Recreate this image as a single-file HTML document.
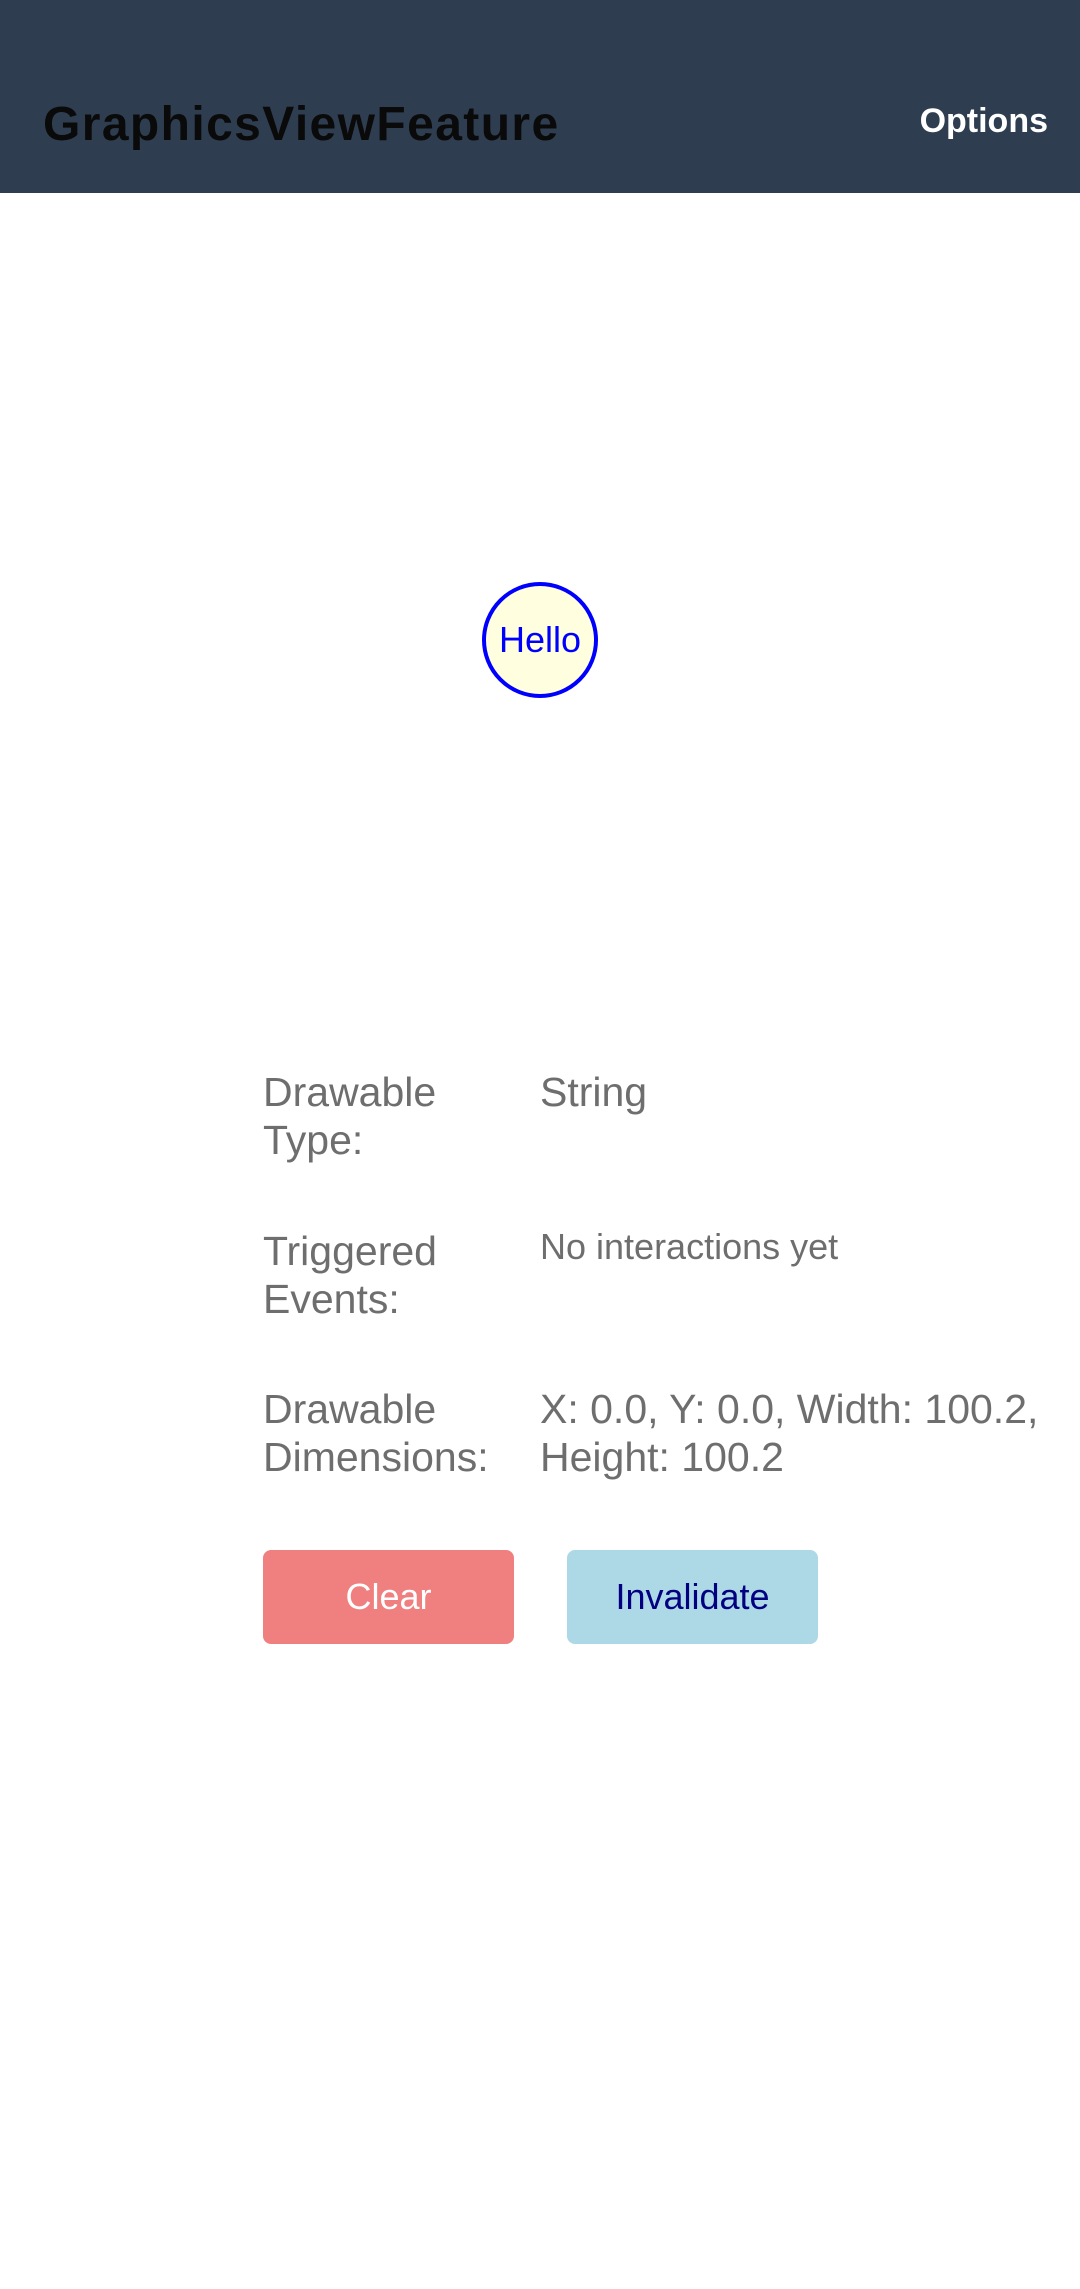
<!DOCTYPE html>
<html><head><meta charset="utf-8">
<style>
*{margin:0;padding:0;box-sizing:border-box}
body{width:1080px;height:2289px;background:#fff;font-family:"Liberation Sans",sans-serif;position:relative;overflow:hidden}
.hdr{position:absolute;left:0;top:0;width:1080px;height:193px;background:#2e3e50}
.title{position:absolute;left:43px;top:95px;font-size:48px;line-height:60px;color:#0a0a0a;font-weight:bold;letter-spacing:1.4px}
.opt{position:absolute;right:32px;top:99px;font-size:34px;line-height:44px;color:#fff;font-weight:bold}
.circle{position:absolute;left:482px;top:582px;width:116px;height:116px;border-radius:50%;border:4px solid #0000ff;background:#ffffe0;color:#0000ff;font-size:36px;display:flex;align-items:center;justify-content:center}
.t{position:absolute;color:#6e6e6e;font-size:41px;line-height:48px}
.btn{position:absolute;top:1550px;height:94px;width:251px;border-radius:8px;display:flex;align-items:center;justify-content:center;font-size:36px}
</style></head><body>
<div class="hdr"><div class="title">GraphicsViewFeature</div><div class="opt">Options</div></div>
<div class="circle">Hello</div>
<div class="t" style="left:263px;top:1068px">Drawable<br>Type:</div>
<div class="t" style="left:540px;top:1068px">String</div>
<div class="t" style="left:263px;top:1227px">Triggered<br>Events:</div>
<div class="t" style="left:540px;top:1225px;font-size:36px;line-height:44px">No interactions yet</div>
<div class="t" style="left:263px;top:1385px">Drawable<br>Dimensions:</div>
<div class="t" style="left:540px;top:1385px;white-space:nowrap">X: 0.0, Y: 0.0, Width: 100.2,<br>Height: 100.2</div>
<div class="btn" style="left:263px;background:#f08080;color:#fff">Clear</div>
<div class="btn" style="left:567px;background:#add8e6;color:#000080">Invalidate</div>
</body></html>
